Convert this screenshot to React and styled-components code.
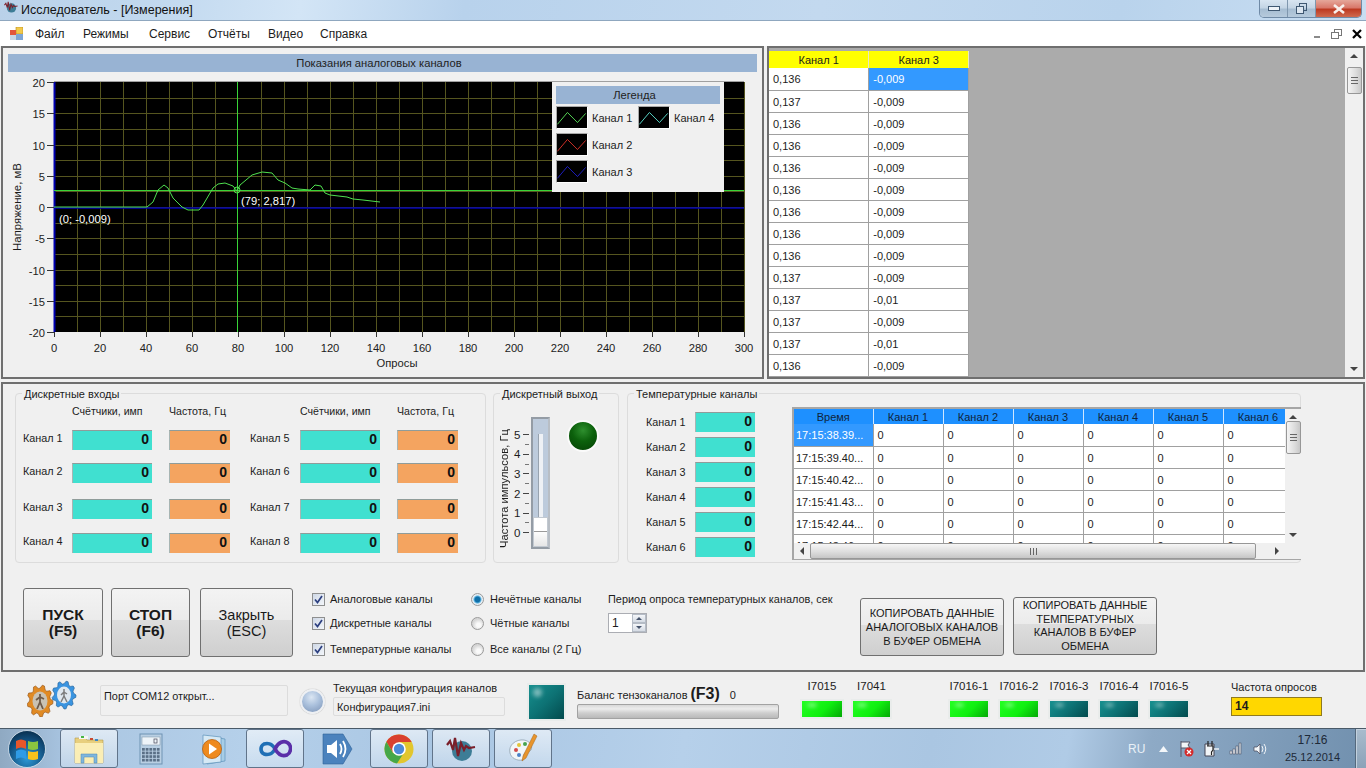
import React from "react";
import styled, { createGlobalStyle } from "styled-components";

const GlobalStyle = createGlobalStyle`
  html, body { margin: 0; padding: 0; background: #f0f0f0; overflow: hidden; }
  * { box-sizing: border-box; }
  body { font-family: "Liberation Sans", Arial, sans-serif; font-size: 11px; color: #1c1c1c; }
`;

const Screen = styled.div`
  width: 1366px;
  height: 768px;
  display: flex;
  flex-direction: column;
  overflow: hidden;
  background: #f0f0f0;
`;

/* window chrome */
const TitleBar = styled.div`
  height: 21px;
  display: flex;
  align-items: flex-start;
  padding-left: 4px;
  background: linear-gradient(100deg, #b9d1e9 0%, #c2d9ef 12%, #d3e5f6 22%, #b8d2ec 34%, #c3d9ef 60%, #b9d3ec 82%, #c9def2 100%);
  border-bottom: 1px solid #8fa7bf;
`;
const TitleText = styled.span`
  margin: 3px 0 0 3px;
  font-size: 12.5px;
  line-height: 14px;
  color: #111;
`;
const WindowButtons = styled.div`
  margin-left: auto;
  margin-right: 4px;
  display: flex;
  height: 18px;
  border: 1px solid #6f8aa6;
  border-top: 0;
  border-radius: 0 0 5px 5px;
  overflow: hidden;
`;
const WindowButton = styled.div`
  width: ${(p) => p.$w}px;
  display: flex;
  align-items: center;
  justify-content: center;
  border-left: ${(p) => (p.$first ? "0" : "1px solid #7f97ae")};
  background: ${(p) =>
    p.$close
      ? "linear-gradient(#e5a79a 0%, #d9786a 45%, #bd3a22 55%, #cf6a4f 100%)"
      : "linear-gradient(#d8e5f1 0%, #c4d5e5 45%, #a6bdd2 55%, #b6cadc 100%)"};
`;
const MenuBar = styled.div`
  height: 25px;
  display: flex;
  align-items: center;
  background: #fff;
  padding-left: 10px;
`;
const MenuItem = styled.span`
  width: ${(p) => p.$w}px;
  font-size: 12px;
  color: #1c1c1c;
`;
const MdiButtons = styled.div`
  margin-left: auto;
  display: flex;
  align-items: center;
  gap: 10px;
  margin-right: 4px;
`;

/* workspace */
const Workspace = styled.div`
  flex: 1;
  display: flex;
  flex-direction: column;
  padding: 0 1px 0 1px;
`;
const TopRow = styled.div`
  height: 336px;
  display: flex;
  gap: 3px;
  padding-bottom: 3px;
`;
const ChartPanel = styled.section`
  width: 763px;
  border: 2px solid #6f6f6f;
  padding: 6px 5px 0;
  background: #f0f0f0;
  display: flex;
  flex-direction: column;
`;
const SectionHeader = styled.div`
  height: ${(p) => p.$h || 18}px;
  display: flex;
  align-items: center;
  justify-content: center;
  padding-right: 7px;
  background: #98b3d3;
  font-size: 11.2px;
  color: #222;
`;
const ChartArea = styled.div`
  position: relative;
  margin-top: 4px;
  height: 300px;
`;
const Legend = styled.div`
  position: absolute;
  left: 544px;
  top: 6px;
  width: 172px;
  height: 110px;
  padding: 4px;
  background: #f0f0f0;
`;
const LegendBody = styled.div`
  display: grid;
  grid-template-columns: 32px 50px 32px 1fr;
  grid-auto-rows: 23px;
  row-gap: 4px;
  margin-top: 2px;
  align-items: center;
`;
const LegendLabel = styled.span`
  padding-left: 4px;
  font-size: 11px;
  white-space: nowrap;
`;
const Swatch = styled.svg`
  display: block;
  width: 32px;
  height: 23px;
  background: #000;
  border: 1px solid #fff;
  border-top-color: #a8a8a8;
  border-left-color: #a8a8a8;
`;

const GridPanel = styled.section`
  flex: 1;
  display: flex;
  border: 2px solid #6f6f6f;
  background: #ababab;
  min-width: 0;
`;
const GridBody = styled.div`
  flex: 1;
  overflow: hidden;
  padding-top: 3px;
`;
const DataTable = styled.table`
  border-collapse: collapse;
  table-layout: fixed;
  width: ${(p) => p.$w}px;
  font-size: 11px;
`;
const YellowHead = styled.th`
  height: 17px;
  padding: 0;
  font-weight: normal;
  background: #ffff00;
  border-right: 1px solid #e8e8c0;
`;
const Cell = styled.td`
  height: ${(p) => p.$h || 22}px;
  padding: 1px 0 0 ${(p) => p.$pad || 4}px;
  background: ${(p) => (p.$selected ? "#3399ff" : "#fff")};
  color: ${(p) => (p.$selected ? "#fff" : "#1c1c1c")};
  border-right: 1px solid #a0a0a0;
  border-bottom: 1px solid #a0a0a0;
  white-space: nowrap;
  overflow: hidden;
`;

/* scrollbars */
const VScroll = styled.div`
  width: ${(p) => p.$w}px;
  flex: none;
  display: flex;
  flex-direction: column;
  align-items: center;
  background: #f0f0f0;
  padding-top: ${(p) => p.$top}px;
`;
const ArrowUp = styled.div`
  flex: none;
  width: 0;
  height: 0;
  border: 4px solid transparent;
  border-top: 0;
  border-bottom: 4px solid #444;
`;
const ArrowDown = styled(ArrowUp)`
  border-bottom: 0;
  border-top: 4px solid #444;
  margin-top: auto;
  margin-bottom: 6px;
`;
const ThumbV = styled.div`
  flex: none;
  width: 15px;
  height: ${(p) => p.$h}px;
  margin-top: ${(p) => p.$gap}px;
  border: 1px solid #979797;
  border-radius: 2px;
  background: linear-gradient(90deg, #f4f4f4, #dcdcdc 60%, #c8c8c8);
  display: flex;
  align-items: center;
  justify-content: center;
`;
const GripV = styled.div`
  width: 7px;
  height: 7px;
  background: repeating-linear-gradient(#666 0 1px, transparent 1px 3px);
`;
const HScroll = styled.div`
  height: 17px;
  display: flex;
  align-items: center;
  background: #f0f0f0;
  padding: 0 22px 0 6px;
`;
const ArrowLeft = styled.div`
  width: 0;
  height: 0;
  border: 4px solid transparent;
  border-left: 0;
  border-right: 4px solid #444;
`;
const ArrowRight = styled.div`
  width: 0;
  height: 0;
  border: 4px solid transparent;
  border-right: 0;
  border-left: 4px solid #444;
  margin-left: auto;
`;
const ThumbH = styled.div`
  width: 446px;
  height: 16px;
  margin-left: 6px;
  border: 1px solid #979797;
  border-radius: 2px;
  background: linear-gradient(#f6f6f6, #dedede 55%, #c6c6c6);
  display: flex;
  align-items: center;
  justify-content: center;
`;
const GripH = styled.div`
  width: 7px;
  height: 7px;
  background: repeating-linear-gradient(90deg, #666 0 1px, transparent 1px 3px);
`;

/* control panel */
const ControlPanel = styled.section`
  height: 290px;
  border: 2px solid #6f6f6f;
  padding: 9px 0 0 12px;
`;
const GroupRow = styled.div`
  display: flex;
  height: 170px;
`;
const Group = styled.div`
  position: relative;
  width: ${(p) => p.$w}px;
  margin-left: ${(p) => p.$ml || 0}px;
  height: 170px;
  border: 1px solid #dcdcdc;
  border-radius: 4px;
  display: ${(p) => (p.$row ? "flex" : "block")};
`;
const GroupTitle = styled.span`
  position: absolute;
  left: 6px;
  top: -7px;
  padding: 0 2px;
  background: #f0f0f0;
  font-size: 11px;
  line-height: 14px;
`;

const inputColumns = "49px 80px 17px 61px 20px 50px 80px 17px 61px";
const InputsGrid = styled.div`
  padding: 10px 0 0 7px;
`;
const InputsRow = styled.div`
  display: grid;
  grid-template-columns: ${inputColumns};
  margin-top: ${(p) => p.$gap || 0}px;
  height: ${(p) => p.$h || 20}px;
  align-items: center;
`;
const ColumnTitle = styled.span`
  font-size: 10.6px;
  grid-column: ${(p) => p.$col};
  white-space: nowrap;
`;
const ChannelLabel = styled.span`
  font-size: 10.8px;
  white-space: nowrap;
  grid-column: ${(p) => p.$col || "auto"};
  padding-bottom: ${(p) => p.$lift || 0}px;
`;
const Readout = styled.div`
  height: 20px;
  padding-right: 3px;
  grid-column: ${(p) => p.$col};
  text-align: right;
  font-size: 14px;
  font-weight: bold;
  line-height: 16px;
  color: #111;
  background: ${(p) => (p.$tone === "orange" ? "#f4a460" : "#40e0d0")};
  border-top: 1px solid #8f9c9a;
  border-left: 1px solid #a7b5b3;
`;

const VerticalLabel = styled.span`
  writing-mode: vertical-rl;
  transform: rotate(180deg);
  height: 118px;
  margin: 36px 0 0 4px;
  font-size: 11.2px;
  white-space: nowrap;
  text-align: left;
`;
const Scale = styled.div`
  margin: 31px 0 0 4px;
  width: 15px;
  display: flex;
  flex-direction: column;
`;
const ScaleRow = styled.div`
  height: 19.6px;
  display: flex;
  align-items: center;
  font-size: 11.5px;
  gap: 3px;
  position: relative;
  &::before {
    content: "";
    width: 6px;
    height: 1px;
    background: #444;
    order: 2;
  }
  &::after {
    content: "";
    position: absolute;
    right: 0;
    top: 19px;
    width: 4px;
    height: 1px;
    background: #777;
    display: ${(p) => (p.$last ? "none" : "block")};
  }
`;
const Slider = styled.div`
  position: relative;
  width: 19px;
  height: 132px;
  margin: 23px 0 0 2px;
  border: 2px solid #949ca5;
  border-right-color: #b8bec5;
  background: #bdcbdc;
`;
const SliderTrack = styled.div`
  position: absolute;
  left: 5px;
  top: 15px;
  bottom: 12px;
  width: 5px;
  background: #eef1f5;
  border-left: 1px solid #98a3af;
`;
const SliderThumb = styled.div`
  position: absolute;
  left: 0;
  right: 0;
  top: 98px;
  bottom: 0;
  border: 1px solid #c2c9d1;
  background: linear-gradient(#ffffff 0 48%, #9a9a9a 48% 50%, #fdfdfd 50%, #e6e6e6);
`;
const Led = styled.div`
  width: 32px;
  height: 32px;
  margin: 26px 0 0 17px;
  border-radius: 50%;
  border: 2px solid #fafafa;
  background: radial-gradient(circle at 50% 30%, #2e8f2e 0%, #0c610c 45%, #054005 100%);
`;

const TempColumn = styled.div`
  width: 128px;
  flex: none;
  padding: 18px 0 0 18px;
  display: flex;
  flex-direction: column;
  gap: 5px;
`;
const TempRow = styled.div`
  height: 20px;
  display: grid;
  grid-template-columns: 49px 60px;
  align-items: center;
`;
const TempBox = styled.div`
  width: 509px;
  flex: none;
  margin: 13px 0 0 36px;
  height: 153px;
  border: 2px solid #a6a6a6;
  border-right: 0;
  display: flex;
  flex-direction: column;
  background: #f0f0f0;
`;
const TempTop = styled.div`
  height: 134px;
  display: flex;
`;
const TempGrid = styled.div`
  width: 491px;
  overflow: hidden;
`;
const BlueHead = styled.th`
  height: 15px;
  padding: 0;
  font-weight: normal;
  background: #1e90ff;
  color: #10243a;
  border-right: 1px solid #cfe6ff;
  overflow: hidden;
  white-space: nowrap;
`;

/* start / stop row */
const ActionRow = styled.div`
  display: flex;
  margin: 25px 0 0 8px;
  height: 70px;
`;
const KeyButton = styled.button`
  width: ${(p) => p.$w}px;
  height: ${(p) => p.$h || 69}px;
  margin: ${(p) => p.$top || 0}px 0 0 ${(p) => p.$ml || 0}px;
  padding: 0;
  border: 1px solid #707070;
  border-radius: 3px;
  background: linear-gradient(#f3f3f3 0%, #ebebeb 47%, #dddddd 47%, #cfcfcf 100%);
  font-family: inherit;
  font-size: ${(p) => p.$size || 14.5}px;
  font-weight: ${(p) => (p.$bold ? "bold" : "normal")};
  line-height: ${(p) => p.$lh || 16}px;
  color: #1a1a1a;
  white-space: nowrap;
`;
const OptionColumn = styled.div`
  margin-left: ${(p) => p.$ml}px;
  width: ${(p) => p.$w}px;
  display: flex;
  flex-direction: column;
`;
const Option = styled.div`
  flex: none;
  height: ${(p) => p.$h || 26}px;
  display: flex;
  align-items: center;
  gap: 5px;
  font-size: 11px;
  white-space: nowrap;
`;
const CheckMark = styled.div`
  width: 13px;
  height: 13px;
  flex: none;
  border: 1px solid #8e8f8f;
  background: linear-gradient(135deg, #cfd8e6, #f3f6fa);
  color: #2c3f80;
  display: flex;
  align-items: center;
  justify-content: center;
`;
const RadioMark = styled.div`
  width: 13px;
  height: 13px;
  flex: none;
  margin-right: 1px;
  border-radius: 50%;
  border: 1px solid #9a9a9a;
  background: ${(p) =>
    p.$on
      ? "radial-gradient(circle, #0f6fa8 0 2.5px, #5fb5e2 3.5px, #e6eef4 4.5px)"
      : "radial-gradient(circle at 60% 65%, #fafafa 0 2px, #d6d6d6 6px)"};
`;
const PeriodColumn = styled.div`
  width: 252px;
  padding-top: 4px;
`;
const PeriodLabel = styled.div`
  height: 14px;
  line-height: 14px;
  font-size: 10.9px;
  white-space: nowrap;
`;
const Spinner = styled.div`
  width: 39px;
  height: 20px;
  margin-top: 7px;
  border: 1px solid #abadb3;
  background: #fff;
  display: flex;
  font-size: 12px;
  line-height: 18px;
  padding-left: 3px;
`;
const SpinStack = styled.div`
  margin-left: auto;
  width: 14px;
  display: flex;
  flex-direction: column;
`;
const SpinBtn = styled.div`
  flex: 1;
  border: 1px solid #b5bcc6;
  background: linear-gradient(#f4f6f9, #d5dbe4);
  display: flex;
  align-items: center;
  justify-content: center;
`;
const TinyUp = styled.div`
  width: 0;
  height: 0;
  border: 3px solid transparent;
  border-top: 0;
  border-bottom: 3px solid #45536b;
`;
const TinyDown = styled(TinyUp)`
  border-bottom: 0;
  border-top: 3px solid #45536b;
`;

/* status bar */
const StatusBar = styled.div`
  height: 56px;
  display: flex;
  align-items: flex-start;
`;
const Slot = styled.div`
  flex: none;
  width: ${(p) => p.$w}px;
  margin: ${(p) => p.$top || 0}px 0 0 ${(p) => p.$ml || 0}px;
`;
const InsetBox = styled.div`
  height: ${(p) => p.$h}px;
  margin-top: ${(p) => p.$top || 0}px;
  padding: ${(p) => p.$py || 2}px 2px 0 3px;
  border: 1px solid #dcdcdc;
  border-radius: 2px;
  font-size: 10.9px;
  line-height: 15px;
  white-space: nowrap;
`;
const Ball = styled.div`
  width: 25px;
  height: 25px;
  border-radius: 50%;
  border: 2px solid #eef0f3;
  background: radial-gradient(circle at 45% 30%, #dbe6f3 0%, #aac0dc 45%, #7a92b5 100%);
  box-shadow: 0 0 1px #888;
`;
const SmallText = styled.div`
  font-size: ${(p) => p.$size || 11}px;
  line-height: 14px;
  white-space: nowrap;
`;
const Lamp = styled.div`
  position: relative;
  height: ${(p) => p.$h || 20}px;
  margin-top: ${(p) => p.$top || 0}px;
  border: 2px solid #e9eceb;
  background: ${(p) =>
    p.$on
      ? "linear-gradient(135deg, #22ff22 0%, #10ef10 55%, #04a806 100%)"
      : "linear-gradient(135deg, #17908f 0%, #0d7274 50%, #024a4d 100%)"};
  &::after {
    content: "";
    position: absolute;
    left: 12%;
    top: 10%;
    width: 26%;
    height: 26%;
    border-radius: 50%;
    background: rgba(255, 255, 255, 0.45);
    filter: blur(2px);
  }
`;
const BalanceLine = styled.div`
  height: 14px;
  display: flex;
  align-items: baseline;
  font-size: 11px;
  white-space: nowrap;
`;
const BalanceKey = styled.b`
  font-size: 16px;
  margin-left: 3px;
`;
const BalanceValue = styled.span`
  margin-left: 10px;
`;
const ProgressBar = styled.div`
  height: 15px;
  margin-top: 5px;
  border: 1px solid #a2a2a2;
  border-radius: 2px;
  background: linear-gradient(#d8d8d8, #ececec 30%, #cfcfcf 60%, #b9b9b9);
`;
const RateBox = styled.div`
  height: 19px;
  margin-top: 3px;
  padding-left: 3px;
  border: 1px solid #8f7a20;
  background: #ffd700;
  font-size: 12px;
  font-weight: bold;
  line-height: 16px;
`;
const LampSlot = styled.div`
  text-align: center;
`;

/* taskbar */
const Taskbar = styled.div`
  height: 40px;
  display: flex;
  align-items: stretch;
  border-top: 1px solid #4a5a68;
  background: linear-gradient(100deg, #a6c2de 0%, #b5d0ea 18%, #a9c6e3 32%, #b6d0ea 50%, #aac6e2 68%, #b0cbe6 78%, #8eaac6 84%, #7190ae 100%);
`;
const StartSlot = styled.div`
  width: 60px;
  flex: none;
  display: flex;
  align-items: center;
  padding-left: 8px;
  background: linear-gradient(90deg, #8fa9c2, #a6c2de);
`;
const TaskButton = styled.div`
  width: 58px;
  flex: none;
  margin-right: 4px;
  display: flex;
  align-items: center;
  justify-content: center;
  border: 1px solid ${(p) => (p.$active ? "#61748a" : "transparent")};
  border-radius: 3px;
  background: ${(p) =>
    p.$active
      ? "linear-gradient(rgba(255,255,255,0.6), rgba(255,255,255,0.25))"
      : "transparent"};
`;
const Tray = styled.div`
  margin-left: auto;
  display: flex;
  align-items: center;
  height: 100%;
`;
const TrayCode = styled.span`
  width: 26px;
  font-size: 12px;
  color: #e9f0f7;
`;
const TrayIcon = styled.span`
  width: ${(p) => p.$w}px;
  display: flex;
  justify-content: center;
`;
const Clock = styled.div`
  width: 85px;
  text-align: center;
  font-size: 12px;
  line-height: 17px;
  color: #1e2a38;
`;
const ClockDate = styled.div`
  font-size: 11px;
`;
const ShowDesktop = styled.div`
  width: 11px;
  height: 100%;
  border-left: 1px solid #55697d;
  box-shadow: inset 1px 1px 0 #c3d1de;
  background: linear-gradient(#a9bccd, #8ba2b8);
`;

/* chart data */
const CURVE = [
  [54, 207], [147, 207], [153, 202], [158, 190], [164, 185], [168, 188], [173, 198], [182, 207],
  [188, 210], [199, 210], [203, 205], [213, 188], [218, 184], [225, 183], [233, 186], [237, 191],
  [240, 185], [252, 175], [262, 172], [272, 173], [278, 180], [285, 183], [292, 188], [298, 189],
  [310, 190], [315, 185], [321, 186], [325, 193], [330, 195], [347, 197], [353, 199], [363, 200], [380, 202],
];
const PX = (v) => 54 + v * 2.3;
const PY = (v) => Math.round(207 - v * 6.25);
const X_GRID = Array.from({ length: 30 }, (_, i) => (i + 1) * 10).filter((v) => v !== 80);
const Y_GRID = Array.from({ length: 15 }, (_, i) => 17.5 - i * 2.5);
const X_LABELS = Array.from({ length: 16 }, (_, i) => i * 20);
const Y_LABELS = [20, 15, 10, 5, 0, -5, -10, -15, -20];

function Chart() {
  return (
    <svg width="749" height="300" viewBox="8 76 749 300" style={{ display: "block" }} fontFamily="Liberation Sans, Arial, sans-serif" fontSize="11.2">
      <rect x="54" y="82" width="690" height="250" fill="#000" />
      {X_GRID.map((v) => (
        <line key={v} x1={PX(v) + 0.5} x2={PX(v) + 0.5} y1="82" y2="332" stroke="#55551f" />
      ))}
      {Y_GRID.map((v) => (
        <line key={v} x1="54" x2="744" y1={PY(v) + 0.5} y2={PY(v) + 0.5} stroke="#55551f" />
      ))}
      <line x1="54" x2="744" y1="81.5" y2="81.5" stroke="#a0a0a0" />
      <line x1="54.5" x2="54.5" y1="82" y2="332" stroke="#0000b0" strokeWidth="2" />
      <line x1="54" x2="744" y1="208" y2="208" stroke="#0000b4" strokeWidth="1.5" />
      <line x1="54" x2="744" y1="190.5" y2="190.5" stroke="#38d438" />
      <line x1="237.5" x2="237.5" y1="82" y2="332" stroke="#38d438" />
      <polyline points={CURVE.map((p) => p.join(",")).join(" ")} fill="none" stroke="#4fe04f" />
      <circle cx="237" cy="190" r="3" fill="none" stroke="#4fe04f" />
      <text x="241" y="205" fill="#fff">(79; 2,817)</text>
      <text x="59" y="223" fill="#fff">(0; -0,009)</text>
      {Y_LABELS.map((v) => (
        <g key={v}>
          <line x1="47" x2="54" y1={PY(v) + 0.5} y2={PY(v) + 0.5} stroke="#333" />
          <text x="45" y={PY(v) + 4.5} textAnchor="end" fill="#1c1c1c">{v}</text>
        </g>
      ))}
      {X_LABELS.map((v) => (
        <g key={v}>
          <line x1={PX(v) + 0.5} x2={PX(v) + 0.5} y1="332" y2="337" stroke="#333" />
          <text x={PX(v)} y="352" textAnchor="middle" fill="#1c1c1c">{v}</text>
        </g>
      ))}
      <text x="397" y="367" textAnchor="middle" fill="#1c1c1c">Опросы</text>
      <text transform="translate(21 207) rotate(-90)" textAnchor="middle" fill="#1c1c1c" fontSize="11.4">Напряжение, мВ</text>
    </svg>
  );
}

function LegendSwatch({ color }) {
  return (
    <Swatch viewBox="0 0 32 23">
      <polyline points="0,19 11,6 22,17 31,7" fill="none" stroke={color} strokeWidth="1" />
    </Swatch>
  );
}

const ANALOG_ROWS = [
  ["0,136", "-0,009"], ["0,137", "-0,009"], ["0,136", "-0,009"], ["0,136", "-0,009"], ["0,136", "-0,009"],
  ["0,136", "-0,009"], ["0,136", "-0,009"], ["0,136", "-0,009"], ["0,136", "-0,009"], ["0,137", "-0,009"],
  ["0,137", "-0,01"], ["0,137", "-0,009"], ["0,137", "-0,01"], ["0,136", "-0,009"], ["0,136", "-0,009"],
];
const INPUT_ROWS = [
  { gap: 12, left: 1, right: 5 },
  { gap: 13, left: 2, right: 6 },
  { gap: 16, left: 3, right: 7 },
  { gap: 14, left: 4, right: 8 },
];
const TEMP_TIMES = ["17:15:38.39...", "17:15:39.40...", "17:15:40.42...", "17:15:41.43...", "17:15:42.44...", "17:15:43.46..."];
const TEMP_COLS = ["Канал 1", "Канал 2", "Канал 3", "Канал 4", "Канал 5", "Канал 6"];

function Gears() {
  const gear = (cx, cy, rx, ry, teeth) => {
    const pts = [];
    for (let i = 0; i < teeth * 4; i++) {
      const a = (i / (teeth * 4)) * Math.PI * 2;
      const k = i % 4 < 2 ? 1 : 0.8;
      pts.push(`${(cx + Math.cos(a) * rx * k).toFixed(1)},${(cy + Math.sin(a) * ry * k).toFixed(1)}`);
    }
    return pts.join(" ");
  };
  return (
    <svg width="50" height="37" viewBox="0 0 50 37">
      <polygon points={gear(13, 21, 13, 16, 9)} fill="#e08a24" stroke="#8f4e12" strokeWidth="0.6" />
      <ellipse cx="13" cy="21" rx="7.5" ry="9.5" fill="#c9c2b4" />
      <polygon points={gear(37, 15, 12, 14, 9)} fill="#3a94e0" stroke="#1f5c94" strokeWidth="0.6" />
      <ellipse cx="37" cy="15" rx="7" ry="8.5" fill="#dfe8ef" />
      <path d="M13 14v8m0-5l-4 3m4-3l4 2m-4 3l-3 7m3-7l3 7" stroke="#6d5a4a" strokeWidth="1.8" fill="none" />
      <path d="M37 9v7m0-4l-3 3m3-3l3 2m-3 2l-3 6m3-6l3 6" stroke="#7d7d7d" strokeWidth="1.5" fill="none" />
    </svg>
  );
}

function WindowsOrb() {
  return (
    <svg width="38" height="38" viewBox="0 0 38 38">
      <defs>
        <radialGradient id="orb" cx="50%" cy="75%" r="70%">
          <stop offset="0%" stopColor="#2f9ad8" />
          <stop offset="70%" stopColor="#12507f" />
          <stop offset="100%" stopColor="#0b3557" />
        </radialGradient>
      </defs>
      <circle cx="19" cy="19" r="18.5" fill="url(#orb)" stroke="#dfeaf3" strokeWidth="0.8" />
      <path d="M8 11q5-3 10 0v8q-5-3-10 0z" fill="#e8562a" />
      <path d="M20 11q5 2 10 0v8q-5 2-10 0z" fill="#8bc43f" />
      <path d="M8 21q5-3 10 0v8q-5-3-10 0z" fill="#2f9be6" />
      <path d="M20 21q5 2 10 0v8q-5 2-10 0z" fill="#f8c21c" />
    </svg>
  );
}
function FolderIcon() {
  return (
    <svg width="32" height="32" viewBox="0 0 32 32">
      <path d="M2 5h10l2 2h16v23H2z" fill="#e8cf7d" stroke="#b69a49" strokeWidth="0.6" />
      <rect x="6" y="3" width="9" height="3" fill="#f5f5f5" />
      <rect x="8" y="3" width="3" height="2" fill="#47b547" />
      <rect x="17" y="5" width="3" height="2" fill="#c9482f" />
      <rect x="22" y="6" width="3" height="2" fill="#3d86c8" />
      <path d="M2 10h28v20H2z" fill="#fbeeb5" />
      <path d="M8 30v-9h16v9h-3v-6H11v6z" fill="#7fb6dd" stroke="#4b86b4" strokeWidth="0.5" />
    </svg>
  );
}
function CalcIcon() {
  const keys = [];
  for (let r = 0; r < 4; r++) for (let c = 0; c < 5; c++) keys.push([c, r]);
  return (
    <svg width="24" height="32" viewBox="0 0 24 32">
      <rect x="1" y="1" width="22" height="30" fill="#b9cfe3" stroke="#6f93b3" />
      <rect x="3" y="4" width="18" height="8" fill="#eef4f9" stroke="#7a8fa5" strokeWidth="0.5" />
      <rect x="15" y="6" width="3" height="4" fill="none" stroke="#445" strokeWidth="0.7" />
      {keys.map(([c, r]) => (
        <rect key={`${c}-${r}`} x={3 + c * 3.7} y={15 + r * 3.6} width="2.8" height="2.7" fill="#5a6f86" />
      ))}
    </svg>
  );
}
function MediaIcon() {
  return (
    <svg width="30" height="32" viewBox="0 0 30 32">
      <path d="M9 3l18 3v22l-18 3z" fill="#a7cde6" stroke="#5e93ba" strokeWidth="0.7" />
      <path d="M5 2l18 2v25L5 31z" fill="#d6e9f5" stroke="#5e93ba" strokeWidth="0.7" />
      <circle cx="14" cy="16" r="9.5" fill="#ee8a1e" stroke="#b55f10" strokeWidth="0.8" />
      <path d="M11 10.5l8 5.5-8 5.5z" fill="#fff" />
    </svg>
  );
}
function VsIcon() {
  return (
    <svg width="34" height="20" viewBox="0 0 34 20">
      <path d="M17 10C14 4 9 4 6 5 2 7 2 13 6 15c3 1 8 1 11-5z" fill="none" stroke="#1f6fb5" strokeWidth="3.6" />
      <path d="M17 10c3-7 9-9 13-6 4 3 3 10-1 12-5 2-9-1-12-6z" fill="none" stroke="#5b2fa8" strokeWidth="3.6" />
    </svg>
  );
}
function SpeakerIcon() {
  return (
    <svg width="32" height="34" viewBox="0 0 32 34">
      <path d="M2 2h20l9 15-9 15H2z" fill="#4b82bd" stroke="#2f6197" strokeWidth="0.6" />
      <path d="M6 13h4l6-5v18l-6-5H6z" fill="#fff" />
      <path d="M19 12q3 5 0 10M22 9q5 8 0 16" fill="none" stroke="#fff" strokeWidth="1.8" />
    </svg>
  );
}
function ChromeIcon() {
  return (
    <svg width="30" height="30" viewBox="0 0 30 30">
      <circle cx="15" cy="15" r="14.5" fill="#e2c62e" />
      <path d="M15 .5A14.5 14.5 0 0 0 2.4 7.8L8.5 18 15 8h12.6A14.5 14.5 0 0 0 15 .5z" fill="#d9402f" />
      <path d="M2.4 7.8A14.5 14.5 0 0 0 13 29.4L18.5 21 9 19z" fill="#45a749" />
      <circle cx="15" cy="15" r="6.8" fill="#fff" />
      <circle cx="15" cy="15" r="5.2" fill="#4c8ad9" />
    </svg>
  );
}
function AppIcon({ size = 30 }) {
  return (
    <svg width={size} height={size} viewBox="0 0 30 30">
      <circle cx="16" cy="17" r="10" fill="#3d7d96" />
      <path d="M1 11l3-4 3 9 2-12 3 18 3-13 3 7 2-4 3 2 6-1" fill="none" stroke="#7a1f2a" strokeWidth="2.2" />
    </svg>
  );
}
function PaintIcon() {
  return (
    <svg width="32" height="32" viewBox="0 0 32 32">
      <path d="M3 20C1 12 9 6 17 7c6 1 9 6 7 10-2 3-6 1-7 4-1 3 2 5-2 6C10 28 4 25 3 20z" fill="#f2f6f8" stroke="#8fa1ae" strokeWidth="0.8" />
      <circle cx="9" cy="17" r="2" fill="#d34a4a" />
      <circle cx="12" cy="12" r="2" fill="#e3c53a" />
      <circle cx="18" cy="11" r="2" fill="#4aa34e" />
      <circle cx="12" cy="22" r="2" fill="#4b82c8" />
      <path d="M27 1l3 2-11 22-4 3 1-5z" fill="#e8952c" stroke="#a66314" strokeWidth="0.5" />
    </svg>
  );
}

const CheckIcon = () => (
  <CheckMark>
    <svg width="9" height="9"><path d="M1 4.5l2.5 3L8 1" fill="none" stroke="currentColor" strokeWidth="1.7" /></svg>
  </CheckMark>
);

export default function App() {
  return (
    <Screen>
      <GlobalStyle />
      <TitleBar>
        <AppIcon size={14} />
        <TitleText>Исследователь - [Измерения]</TitleText>
        <WindowButtons>
          <WindowButton $w={27} $first>
            <svg width="12" height="5"><rect x=".5" y=".5" width="11" height="4" fill="#eef3f8" stroke="#3f5872" /></svg>
          </WindowButton>
          <WindowButton $w={28}>
            <svg width="11" height="11"><rect x="3.5" y=".5" width="7" height="7" fill="none" stroke="#3f5872" /><rect x=".5" y="3.5" width="7" height="7" fill="#dce6f0" stroke="#3f5872" /></svg>
          </WindowButton>
          <WindowButton $w={46} $close>
            <svg width="12" height="10"><path d="M1 1l10 8M11 1L1 9" stroke="#f8f0ec" strokeWidth="2.6" /></svg>
          </WindowButton>
        </WindowButtons>
      </TitleBar>

      <MenuBar>
        <svg width="13" height="13" style={{ marginRight: 12 }}>
          <rect x="6" y="0" width="7" height="7" fill="#f2c94c" stroke="#b58a1c" strokeWidth=".6" />
          <rect x="0" y="3" width="6" height="5" fill="#e2553d" />
          <rect x="0" y="8" width="6" height="5" fill="#c9d6e6" />
          <rect x="6" y="7" width="7" height="6" fill="#7ea6d6" />
        </svg>
        <MenuItem $w={48}>Файл</MenuItem>
        <MenuItem $w={66}>Режимы</MenuItem>
        <MenuItem $w={59}>Сервис</MenuItem>
        <MenuItem $w={60}>Отчёты</MenuItem>
        <MenuItem $w={52}>Видео</MenuItem>
        <MenuItem $w={60}>Справка</MenuItem>
        <MdiButtons>
          <svg width="8" height="10"><rect x="1" y="7" width="6" height="2" fill="#8a8a8a" /></svg>
          <svg width="11" height="10"><rect x="3.5" y=".5" width="7" height="6" fill="#fff" stroke="#777" /><rect x=".5" y="3.5" width="7" height="6" fill="#fff" stroke="#777" /></svg>
          <svg width="10" height="10"><path d="M1 1l8 8M9 1L1 9" stroke="#000" strokeWidth="2.2" /></svg>
        </MdiButtons>
      </MenuBar>

      <Workspace>
        <TopRow>
          <ChartPanel>
            <SectionHeader>Показания аналоговых каналов</SectionHeader>
            <ChartArea>
              <Chart />
              <Legend>
                <SectionHeader>Легенда</SectionHeader>
                <LegendBody>
                  <LegendSwatch color="#5be65b" />
                  <LegendLabel>Канал 1</LegendLabel>
                  <LegendSwatch color="#5fe6d6" />
                  <LegendLabel>Канал 4</LegendLabel>
                  <LegendSwatch color="#e0332a" />
                  <LegendLabel>Канал 2</LegendLabel>
                  <span />
                  <span />
                  <LegendSwatch color="#2020d0" />
                  <LegendLabel>Канал 3</LegendLabel>
                </LegendBody>
              </Legend>
            </ChartArea>
          </ChartPanel>

          <GridPanel>
            <GridBody>
              <DataTable $w={200}>
                <thead>
                  <tr>
                    <YellowHead>Канал 1</YellowHead>
                    <YellowHead>Канал 3</YellowHead>
                  </tr>
                </thead>
                <tbody>
                  {ANALOG_ROWS.map((row, i) => (
                    <tr key={i}>
                      <Cell>{row[0]}</Cell>
                      <Cell $selected={i === 0}>{row[1]}</Cell>
                    </tr>
                  ))}
                </tbody>
              </DataTable>
            </GridBody>
            <VScroll $w={18} $top={6}>
              <ArrowUp />
              <ThumbV $h={27} $gap={9}><GripV /></ThumbV>
              <ArrowDown />
            </VScroll>
          </GridPanel>
        </TopRow>

        <ControlPanel>
          <GroupRow>
            <Group $w={471}>
              <GroupTitle>Дискретные входы</GroupTitle>
              <InputsGrid>
                <InputsRow $h={14}>
                  <ColumnTitle $col={2}>Счётчики, имп</ColumnTitle>
                  <ColumnTitle $col={4}>Частота, Гц</ColumnTitle>
                  <ColumnTitle $col={7}>Счётчики, имп</ColumnTitle>
                  <ColumnTitle $col={9}>Частота, Гц</ColumnTitle>
                </InputsRow>
                {INPUT_ROWS.map((row) => (
                  <InputsRow key={row.left} $gap={row.gap}>
                    <ChannelLabel $lift={4}>Канал {row.left}</ChannelLabel>
                    <Readout $col={2}>0</Readout>
                    <Readout $col={4} $tone="orange">0</Readout>
                    <ChannelLabel $col={6} $lift={4}>Канал {row.right}</ChannelLabel>
                    <Readout $col={7}>0</Readout>
                    <Readout $col={9} $tone="orange">0</Readout>
                  </InputsRow>
                ))}
              </InputsGrid>
            </Group>

            <Group $w={126} $ml={7} $row>
              <GroupTitle>Дискретный выход</GroupTitle>
              <VerticalLabel>Частота импульсов, Гц</VerticalLabel>
              <Scale>
                {[5, 4, 3, 2, 1, 0].map((n) => (
                  <ScaleRow key={n} $last={n === 0}>{n}</ScaleRow>
                ))}
              </Scale>
              <Slider>
                <SliderTrack />
                <SliderThumb />
              </Slider>
              <Led />
            </Group>

            <Group $w={674} $ml={8} $row>
              <GroupTitle>Температурные каналы</GroupTitle>
              <TempColumn>
                {[1, 2, 3, 4, 5, 6].map((n) => (
                  <TempRow key={n}>
                    <ChannelLabel>Канал {n}</ChannelLabel>
                    <Readout>0</Readout>
                  </TempRow>
                ))}
              </TempColumn>
              <TempBox>
                <TempTop>
                  <TempGrid>
                    <DataTable $w={491}>
                      <colgroup>
                        <col style={{ width: 79 }} />
                        {TEMP_COLS.map((c) => <col key={c} style={{ width: 70 }} />)}
                      </colgroup>
                      <thead>
                        <tr>
                          <BlueHead>Время</BlueHead>
                          {TEMP_COLS.map((c) => <BlueHead key={c}>{c}</BlueHead>)}
                        </tr>
                      </thead>
                      <tbody>
                        {TEMP_TIMES.map((t, i) => (
                          <tr key={t}>
                            <Cell $pad={2} $selected={i === 0}>{t}</Cell>
                            {TEMP_COLS.map((c) => <Cell key={c}>0</Cell>)}
                          </tr>
                        ))}
                      </tbody>
                    </DataTable>
                  </TempGrid>
                  <VScroll $w={16} $top={6}>
                    <ArrowUp />
                    <ThumbV $h={33} $gap={2}><GripV /></ThumbV>
                    <ArrowDown />
                  </VScroll>
                </TempTop>
                <HScroll>
                  <ArrowLeft />
                  <ThumbH><GripH /></ThumbH>
                  <ArrowRight />
                </HScroll>
              </TempBox>
            </Group>
          </GroupRow>

          <ActionRow>
            <KeyButton $w={80} $bold $size={15.5}>ПУСК<br />(F5)</KeyButton>
            <KeyButton $w={79} $ml={8} $bold $size={15.5}>СТОП<br />(F6)</KeyButton>
            <KeyButton $w={93} $ml={10}>Закрыть<br />(ESC)</KeyButton>

            <OptionColumn $ml={19} $w={159}>
              <Option $h={22}><CheckIcon />Аналоговые каналы</Option>
              <Option><CheckIcon />Дискретные каналы</Option>
              <Option><CheckIcon />Температурные каналы</Option>
            </OptionColumn>
            <OptionColumn $ml={0} $w={137}>
              <Option $h={22}><RadioMark $on />Нечётные каналы</Option>
              <Option><RadioMark />Чётные каналы</Option>
              <Option><RadioMark />Все каналы (2 Гц)</Option>
            </OptionColumn>
            <PeriodColumn>
              <PeriodLabel>Период опроса температурных каналов, сек</PeriodLabel>
              <Spinner>
                1
                <SpinStack>
                  <SpinBtn><TinyUp /></SpinBtn>
                  <SpinBtn><TinyDown /></SpinBtn>
                </SpinStack>
              </Spinner>
            </PeriodColumn>
            <KeyButton $w={144} $h={58} $top={10} $size={11} $lh={14}>
              КОПИРОВАТЬ ДАННЫЕ<br />АНАЛОГОВЫХ КАНАЛОВ<br />В БУФЕР ОБМЕНА
            </KeyButton>
            <KeyButton $w={144} $h={58} $top={9} $ml={9} $size={11} $lh={13.5}>
              КОПИРОВАТЬ ДАННЫЕ<br />ТЕМПЕРАТУРНЫХ<br />КАНАЛОВ В БУФЕР<br />ОБМЕНА
            </KeyButton>
          </ActionRow>
        </ControlPanel>

        <StatusBar>
          <Slot $w={50} $ml={26} $top={8}><Gears /></Slot>
          <Slot $w={188} $ml={23} $top={13}>
            <InsetBox $h={31} $py={3}>Порт COM12 открыт...</InsetBox>
          </Slot>
          <Slot $w={25} $ml={12} $top={17}><Ball /></Slot>
          <Slot $w={172} $ml={8} $top={9}>
            <SmallText>Текущая конфигурация каналов</SmallText>
            <InsetBox $h={19} $top={2}>Конфигурация7.ini</InsetBox>
          </Slot>
          <Slot $w={39} $ml={22} $top={11}><Lamp $h={38} /></Slot>
          <Slot $w={202} $ml={11} $top={13}>
            <BalanceLine>
              Баланс тензоканалов <BalanceKey>(F3)</BalanceKey><BalanceValue>0</BalanceValue>
            </BalanceLine>
            <ProgressBar />
          </Slot>
          <Slot $w={44} $ml={21} $top={7}>
            <LampSlot><SmallText $size={11.5}>I7015</SmallText></LampSlot>
            <Lamp $on $top={6} />
          </Slot>
          <Slot $w={41} $ml={7} $top={7}>
            <LampSlot><SmallText $size={11.5}>I7041</SmallText></LampSlot>
            <Lamp $on $top={6} />
          </Slot>
          {["I7016-1", "I7016-2", "I7016-3", "I7016-4", "I7016-5"].map((name, i) => (
            <Slot key={name} $w={42} $ml={i === 0 ? 56 : 8} $top={7}>
              <LampSlot><SmallText $size={11.5}>{name}</SmallText></LampSlot>
              <Lamp $on={i < 2} $top={6} />
            </Slot>
          ))}
          <Slot $w={91} $ml={41} $top={8}>
            <SmallText>Частота опросов</SmallText>
            <RateBox>14</RateBox>
          </Slot>
        </StatusBar>
      </Workspace>

      <Taskbar>
        <StartSlot><WindowsOrb /></StartSlot>
        <TaskButton $active><FolderIcon /></TaskButton>
        <TaskButton><CalcIcon /></TaskButton>
        <TaskButton><MediaIcon /></TaskButton>
        <TaskButton $active><VsIcon /></TaskButton>
        <TaskButton><SpeakerIcon /></TaskButton>
        <TaskButton $active><ChromeIcon /></TaskButton>
        <TaskButton $active><AppIcon /></TaskButton>
        <TaskButton $active><PaintIcon /></TaskButton>
        <Tray>
          <TrayCode>RU</TrayCode>
          <TrayIcon $w={18}>
            <svg width="9" height="6"><path d="M4.5 0L9 6H0z" fill="#f4f7fa" /></svg>
          </TrayIcon>
          <TrayIcon $w={30}>
            <svg width="16" height="18" viewBox="0 0 16 18">
              <path d="M2 1v16M2 2h9l-2 3 2 3H2" fill="#f2f5f8" stroke="#556" strokeWidth="1" />
              <circle cx="10" cy="12" r="4.5" fill="#d42b2b" />
              <path d="M8 10l4 4M12 10l-4 4" stroke="#fff" strokeWidth="1.2" />
            </svg>
          </TrayIcon>
          <TrayIcon $w={20}>
            <svg width="16" height="18" viewBox="0 0 16 18">
              <path d="M1 4h9v12H1z" fill="#f2f5f8" stroke="#445" strokeWidth="1" />
              <path d="M4 1v5M8 1v5M3 6h6v4l-1.5 2v3" fill="#f2f5f8" stroke="#222" strokeWidth="1.2" />
              <path d="M10 9h5" stroke="#f2f5f8" strokeWidth="1.4" />
            </svg>
          </TrayIcon>
          <TrayIcon $w={28}>
            <svg width="15" height="13">
              <rect x="1" y="9" width="2" height="3" fill="#f2f5f8" stroke="#445" strokeWidth=".5" />
              <rect x="4" y="7" width="2" height="5" fill="#f2f5f8" stroke="#445" strokeWidth=".5" />
              <rect x="7" y="4" width="2" height="8" fill="#dfe6ec" stroke="#445" strokeWidth=".5" />
              <rect x="10" y="1" width="2" height="11" fill="#cdd6de" stroke="#445" strokeWidth=".5" />
            </svg>
          </TrayIcon>
          <TrayIcon $w={20}>
            <svg width="15" height="14" viewBox="0 0 15 14">
              <path d="M1 5h3l3-3v10L4 9H1z" fill="#f2f5f8" stroke="#445" strokeWidth=".7" />
              <path d="M9 4q2 3 0 6M11 2q3.5 5 0 10" fill="none" stroke="#f2f5f8" strokeWidth="1" />
            </svg>
          </TrayIcon>
          <Clock>17:16<ClockDate>25.12.2014</ClockDate></Clock>
          <ShowDesktop />
        </Tray>
      </Taskbar>
    </Screen>
  );
}
